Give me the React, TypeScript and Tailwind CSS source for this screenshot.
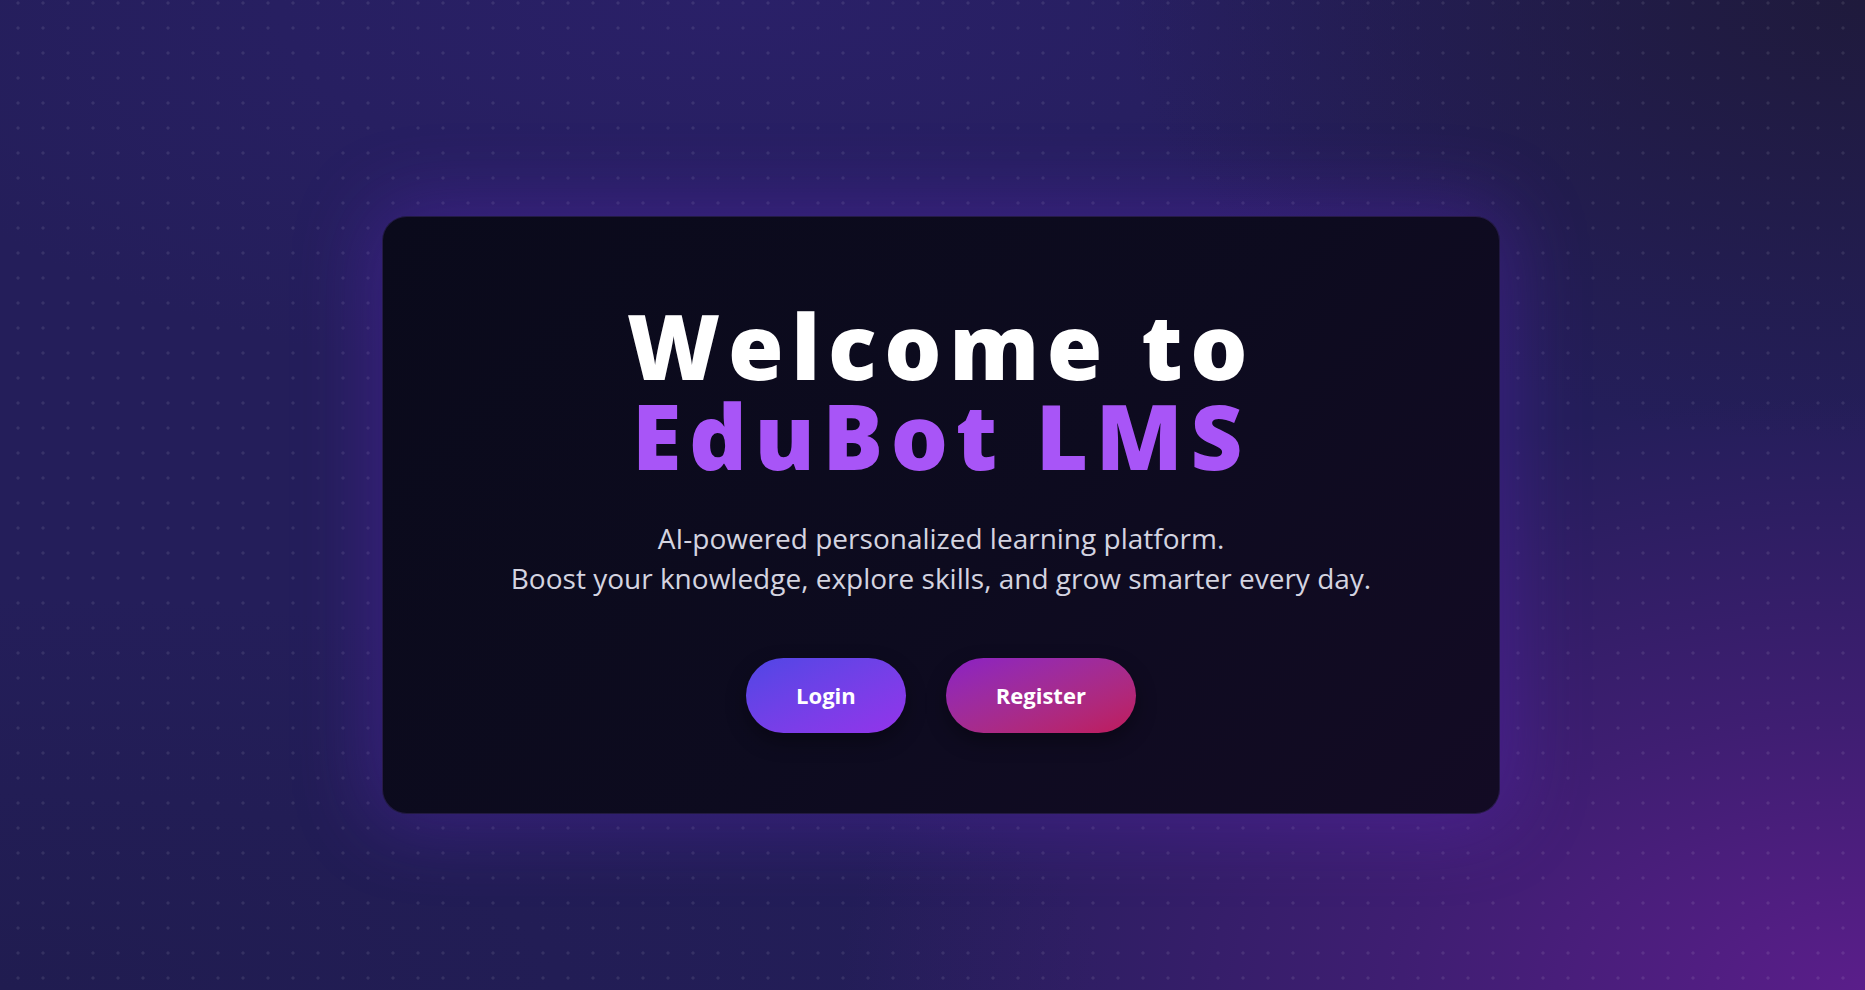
import React from "react";

function PlusGrid() {
  return (
    <svg className="absolute inset-0 h-full w-full" aria-hidden="true">
      <defs>
        <pattern id="plus" x="16" y="1" width="25" height="25" patternUnits="userSpaceOnUse">
          <path d="M2 0v4M0 2h4" stroke="rgba(255,255,255,0.09)" strokeWidth="1" />
        </pattern>
      </defs>
      <rect width="100%" height="100%" fill="url(#plus)" />
    </svg>
  );
}

export default function App() {
  return (
    <div className="relative min-h-screen overflow-hidden bg-[#241e5a] font-['Open_Sans',sans-serif]">
      <div className="absolute inset-0 bg-[radial-gradient(ellipse_55%_60%_at_100%_100%,#5a1e8a_0%,rgba(90,30,138,0.5)_45%,transparent_100%),radial-gradient(ellipse_40%_45%_at_100%_0%,#1f1a3c_0%,transparent_100%),radial-gradient(ellipse_50%_40%_at_40%_0%,#2a2068_0%,transparent_100%),radial-gradient(ellipse_60%_40%_at_0%_100%,#201c50_0%,transparent_100%)]" />
      <PlusGrid />

      <div className="relative flex min-h-screen items-center justify-center pt-10 pl-[17px]">
        <div className="w-[1118px] rounded-[25px] border border-[rgba(139,92,246,0.18)] bg-[linear-gradient(135deg,#0a0a1b_0%,#0d0b1f_55%,#130b24_100%)] px-10 pt-[83px] pb-[80px] text-center shadow-[0_0_80px_10px_rgba(110,40,220,0.3)]">
          <h1 className="text-[90px] font-extrabold leading-none tracking-[0.085em] text-white">
            Welcome to
            <br />
            <span className="text-[#a855f7]">EduBot LMS</span>
          </h1>

          <p className="mt-[38px] text-[28px] leading-[40px] text-[#d4d4e0]">
            AI-powered personalized learning platform.
            <br />
            Boost your knowledge, explore skills, and grow smarter every day.
          </p>

          <div className="mt-[60px] flex items-center justify-center gap-10">
            <button className="h-[75px] rounded-full bg-gradient-to-br from-[#4f46e5] to-[#9333ea] px-[50px] text-[22px] font-bold text-white shadow-[0_8px_20px_rgba(0,0,0,0.35)]">
              Login
            </button>
            <button className="h-[75px] rounded-full bg-gradient-to-br from-[#8b1fc4] to-[#c0185a] px-[50px] text-[22px] font-bold text-white shadow-[0_8px_20px_rgba(0,0,0,0.35)]">
              Register
            </button>
          </div>
        </div>
      </div>
    </div>
  );
}
